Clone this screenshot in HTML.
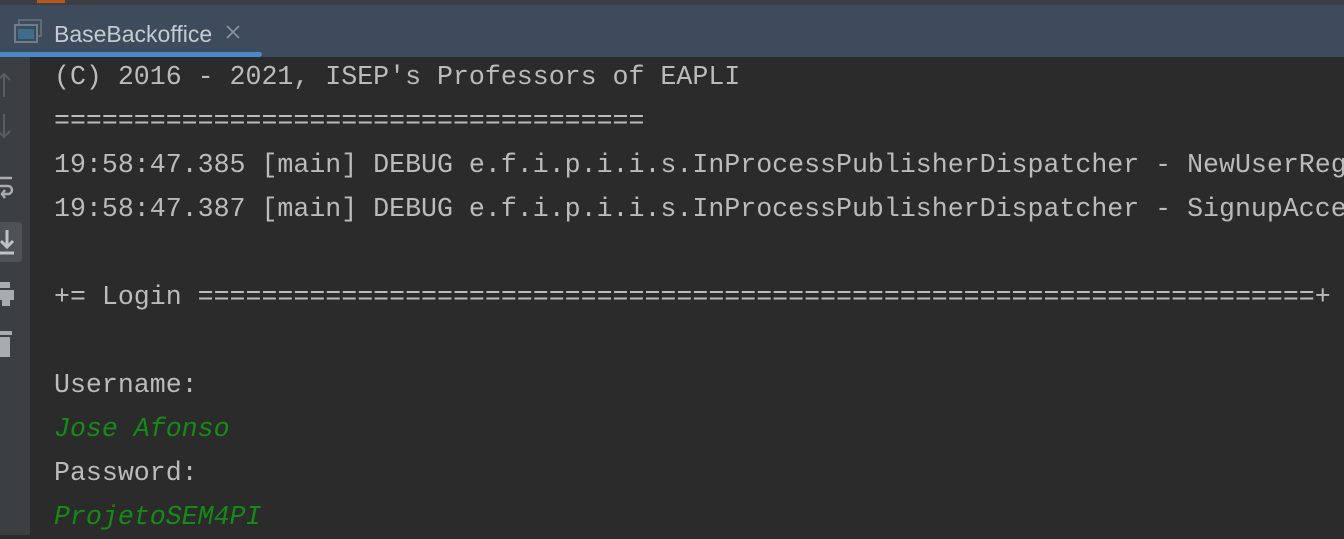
<!DOCTYPE html>
<html><head><style>
body{margin:0;width:1344px;height:535px;overflow:hidden;background:#2b2b2b;position:relative;font-family:"Liberation Mono",monospace}
.top{position:absolute;left:0;top:0;width:1344px;height:5px;background:#3c3f41}
.tabbar{position:absolute;left:0;top:5px;width:1344px;height:52px;background:#3d4b5c}
.tab{position:absolute;left:54px;top:16px;font:23px "Liberation Sans",sans-serif;color:#c6cbd1}
.ul{position:absolute;left:0;top:52px;width:262px;height:5px;background:#4a88c7;border-radius:0 3px 3px 0}
.side{position:absolute;left:0;top:57px;width:30px;height:478px;background:#3c3f41}
.txt{position:absolute;left:54px;top:55px;width:1290px;overflow:hidden;font-size:26.6px;line-height:44px;color:#bbbbbb;white-space:pre}
.g{color:#168a16;font-style:italic}
</style></head><body>
<div class="top"><div style="position:absolute;left:37px;top:0;width:28px;height:3px;background:#b8561f"></div></div>
<div class="tabbar">
<svg style="position:absolute;left:14px;top:14px" width="30" height="26"><rect x="5" y="1" width="22" height="16" fill="none" stroke="#5e6b78" stroke-width="2"/><rect x="1" y="6" width="22" height="17" fill="#3d4b5c" stroke="#6f7d8b" stroke-width="2"/><rect x="4" y="10" width="16" height="10" fill="#3e6e8a"/></svg>
<div class="tab">BaseBackoffice</div>
<svg style="position:absolute;left:225px;top:19px" width="16" height="16"><path d="M2 2L14 14M14 2L2 14" stroke="#8a939c" stroke-width="1.6"/></svg>
</div>
<div class="ul"></div>
<div class="side">
<svg width="30" height="300" style="position:absolute;left:0;top:0">
<path d="M2 23L8 17L14 23M8 17V40" stroke="#5a5d5f" stroke-width="2" fill="none" transform="translate(-4,0)"/>
<path d="M4 74L10 80L16 74M10 80V57" stroke="#5a5d5f" stroke-width="2" fill="none" transform="translate(-6,0)"/>
<path d="M0 121H12M0 129H8a4 4 0 0 1 0 8H2M5 133l-3 4l3 4" stroke="#a9acae" stroke-width="2.5" fill="none"/>
<rect x="-6" y="165" width="28" height="40" rx="4" fill="#4e5254"/>
<path d="M7 173V190M1 184L7 190L13 184M0 196H14" stroke="#c0c3c5" stroke-width="3" fill="none"/>
<rect x="0" y="225" width="10" height="6" fill="#a9acae"/><rect x="0" y="233" width="14" height="10" fill="#a9acae"/><rect x="2" y="243" width="8" height="6" fill="#a9acae"/>
<rect x="0" y="274" width="12" height="4" fill="#a9acae"/><rect x="0" y="280" width="10" height="22" fill="#a9acae"/>
</svg>
</div>
<div class="txt">(C) 2016 - 2021, ISEP's Professors of EAPLI
=====================================
19:58:47.385 [main] DEBUG e.f.i.p.i.i.s.InProcessPublisherDispatcher - NewUserRegisteredEvent
19:58:47.387 [main] DEBUG e.f.i.p.i.i.s.InProcessPublisherDispatcher - SignupAcceptedEvent

+= Login ======================================================================+

Username:
<span class="g">Jose Afonso</span>
Password:
<span class="g">ProjetoSEM4PI</span></div>
</body></html>
